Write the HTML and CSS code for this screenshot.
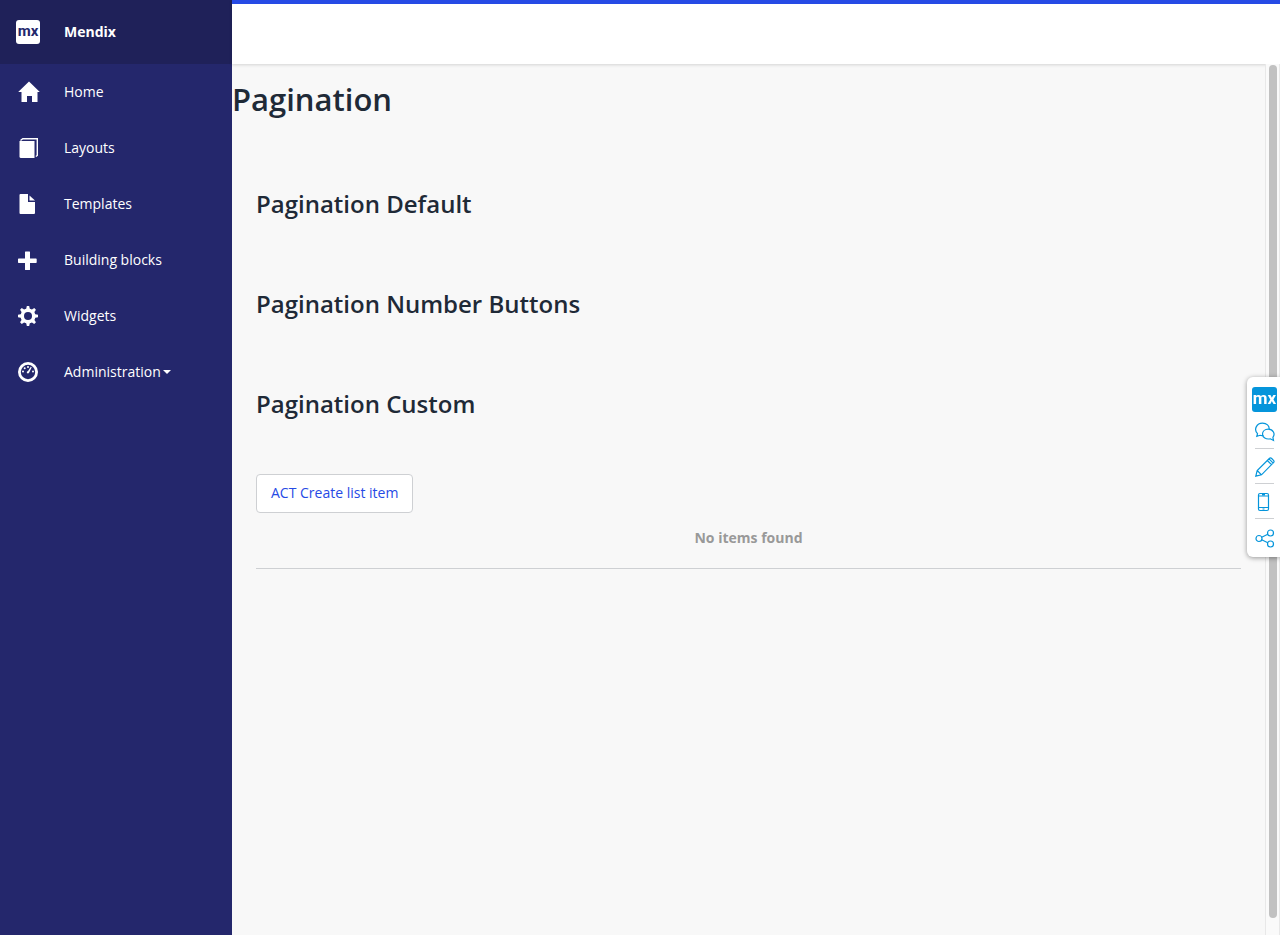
FILE: index.html
```html
<!DOCTYPE html>
<html lang="en">
<head>
<meta charset="utf-8">
<title>Pagination</title>
<link rel="stylesheet" href="styles.css">
</head>
<body>
<div class="app">
  <aside class="sidebar">
    <div class="brand"><span class="brand-logo">mx</span><span class="brand-name">Mendix</span></div>
    <nav class="nav">
      <a class="nav-item" href="#"><svg class="nav-icon" viewBox="0 0 24 24"><path d="M13 1.500 23.800 12H21.500v10h-5.500v-6h-5V22H5.500V12H2.200z"/></svg>Home</a>
      <a class="nav-item" href="#"><svg class="nav-icon" viewBox="0 0 24 24"><path d="M3.500 5h15v17h-13.500q-1.500 0-1.500-1.500z"/><path d="M4.500 4.500 6.800 2.700H21.300V19.500L19.800 20.500" fill="none" stroke="#fff" stroke-width="1.400"/></svg>Layouts</a>
      <a class="nav-item" href="#"><svg class="nav-icon" viewBox="0 0 24 24"><path d="M4.500 2H12v8h7v11q0 1-1 1H4.500q-1 0-1-1V3q0-1 1-1z"/><path d="M13.500 3.500 19 8.500h-5.500z"/></svg>Templates</a>
      <a class="nav-item" href="#"><svg class="nav-icon" viewBox="0 0 24 24"><path d="M9.500 3.500h4q.5 0 .5.5v6.500h6q.7 0 .7.700v3q0 .8-.7.800h-6V21.500q0 .5-.5.500h-4q-.5 0-.5-.5V15H2.700q-.7 0-.7-.8v-3q0-.7.7-.7H9V4q0-.5.5-.5z"/></svg>Building blocks</a>
      <a class="nav-item" href="#"><svg class="nav-icon" viewBox="0 0 24 24"><path d="M10 6 10.800 2h2.400L14 6v12l-.8 4h-2.400L10 18z"/><path d="M10 6 10.800 2h2.400L14 6v12l-.8 4h-2.400L10 18z" transform="rotate(45 12 12)"/><path d="M10 6 10.800 2h2.400L14 6v12l-.8 4h-2.400L10 18z" transform="rotate(90 12 12)"/><path d="M10 6 10.800 2h2.400L14 6v12l-.8 4h-2.400L10 18z" transform="rotate(135 12 12)"/><circle cx="12" cy="12" r="7.500"/><circle cx="12" cy="12" r="4" fill="#24276c"/></svg>Widgets</a>
      <a class="nav-item" href="#"><svg class="nav-icon" viewBox="0 0 24 24"><circle cx="12" cy="12" r="8.600" fill="none" stroke="#fff" stroke-width="2.800"/><circle cx="7" cy="11.500" r="1"/><circle cx="8.700" cy="8.300" r="1"/><circle cx="12" cy="7" r="1"/><circle cx="17" cy="11.500" r="1"/><path d="M14.800 6.700 15.700 7.200 13.200 12.500Q12 14.500 10.800 12.800 10.500 11.500 12 11z"/></svg>Administration<span class="caret"></span></a>
    </nav>
  </aside>
  <div class="page">
    <header class="topbar"></header>
    <div class="body">
      <main class="content">
        <h1 class="title">Pagination</h1>
        <div class="sections">
          <h2 class="section-title">Pagination Default</h2>
          <h2 class="section-title">Pagination Number Buttons</h2>
          <h2 class="section-title">Pagination Custom</h2>
          <button class="button" type="button">ACT Create list item</button>
          <div class="empty">No items found</div>
        </div>
      </main>
      <div class="scroll-track"><div class="scroll-thumb"></div></div>
    </div>
  </div>
</div>
<div class="toolbox">
  <span class="toolbox-logo">mx</span>
  <button class="tool" type="button" aria-label="Feedback"><svg viewBox="0 0 20 20"><path d="M8.500 13.500Q6.500 13.800 5 13.300L1.800 14.300 2.500 11.700C-1.500 7.500 1.500 1.200 7.500 1.200c4.200 0 7 2.600 6.600 5.800"/><path d="M13.300 7.200c-3.600 0-5.800 2.200-5.800 4.900 0 3.500 3.500 5.600 7.800 4.700l3.200 1.700-.6-3.200c2.700-3.300.2-8.100-4.600-8.100z"/></svg></button>
  <button class="tool" type="button" aria-label="Edit"><svg viewBox="0 0 20 20"><path d="M.8 19.200 2.200 13.500 14.300 1.500q1.200-1.200 2.400 0l1.800 1.800q1.200 1.200 0 2.400L6.500 17.800zM2.200 13.500l4.300 4.300M12.300 3.500l4.200 4.200M14 1.900l4.200 4.200"/></svg></button>
  <button class="tool" type="button" aria-label="Device view"><svg viewBox="0 0 20 20"><rect x="3.500" y="1.500" width="10" height="17" rx="1.500"/><path d="M3.500 4h10M3.500 15.500h10M7 2.700h3M7.500 17h2"/></svg></button>
  <button class="tool" type="button" aria-label="Share"><svg viewBox="0 0 20 20"><circle cx="4" cy="10.500" r="3"/><circle cx="15.500" cy="5" r="3"/><circle cx="15.500" cy="16" r="3"/><path d="M6.700 9.200 12.800 6.300M6.700 11.800l6.100 2.900"/></svg></button>
</div>
</body>
</html>
```
FILE: styles.css
```css
* { box-sizing: border-box; }
body {
  margin: 0;
  background: #f8f8f8;
  color: #1f2a37;
  font: 14px/20px "Open Sans", sans-serif;
}
.app { display: flex; min-height: 100vh; }
.sidebar { flex: 0 0 232px; background: #24276c; color: #fff; }
.brand {
  display: flex;
  align-items: center;
  gap: 24px;
  height: 64px;
  padding: 0 16px;
  background: #1f2159;
}
.brand-logo {
  width: 24px;
  height: 24px;
  border-radius: 3px;
  background: #fff;
  color: #24276c;
  font: 700 15px/22px Roboto, sans-serif;
  text-align: center;
}
.brand-name { font-weight: 700; }
.nav-item {
  display: flex;
  align-items: center;
  height: 56px;
  padding: 0 16px;
  color: #fff;
  text-decoration: none;
}
.nav-icon { width: 24px; height: 24px; margin-right: 24px; fill: #fff; }
.caret {
  margin-left: 2px;
  border: 4px solid transparent;
  border-top-color: #fff;
  border-bottom: 0;
}
.page { flex: 1; display: flex; flex-direction: column; min-width: 0; }
.topbar {
  height: 64px;
  border-top: 4px solid #264ae5;
  background: #fff;
  box-shadow: 0 1px 3px rgba(0, 0, 0, 0.15);
}
.body { flex: 1; display: flex; }
.content { flex: 1; }
.title { margin: 14px 0 0; font-size: 31px; font-weight: 600; line-height: 42px; }
.sections { padding: 66px 24px 0; }
.section-title { margin: 0 0 64px; font-size: 24px; font-weight: 600; line-height: 36px; }
.button {
  display: block;
  margin-top: -12px;
  height: 39px;
  padding: 0 14px 2px;
  border: 1px solid #ced0d3;
  border-radius: 4px;
  background: #fff;
  color: #264ae5;
  font: inherit;
}
.empty {
  padding: 15px 0 20px;
  border-bottom: 1px solid #ced0d3;
  color: #999;
  font-weight: 700;
  text-align: center;
}
.scroll-track {
  width: 15px;
  padding: 1px 2px 17px 3px;
  border: solid #e8e8e8;
  border-width: 0 1px;
  background: #fafafa;
  display: flex;
}
.scroll-thumb { flex: 1; border-radius: 4px; background: #c1c1c1; }
.toolbox {
  position: fixed;
  right: 0;
  top: 377px;
  width: 33px;
  padding: 10px 0 3px 5px;
  border-radius: 6px 0 0 6px;
  background: #fff;
  box-shadow: 0 1px 5px rgba(0, 0, 0, 0.4);
}
.toolbox-logo {
  display: block;
  width: 25px;
  height: 25px;
  margin-bottom: 1px;
  border-radius: 3px;
  background: #0595db;
  color: #fff;
  font: 700 17px/22px Roboto, sans-serif;
  text-align: center;
}
.tool {
  display: block;
  width: 19px;
  height: 35px;
  margin-left: 3px;
  padding: 2px 0 0;
  border: 0;
  border-top: 1px solid #ced0d3;
  background: none;
}
.toolbox-logo + .tool { border-top-color: transparent; }
.tool:last-child { height: 36px; }
.tool svg {
  display: block;
  width: 20px;
  height: 20px;
  margin: 0 auto;
  fill: none;
  stroke: #0595db;
  stroke-width: 1.2;
}
```
